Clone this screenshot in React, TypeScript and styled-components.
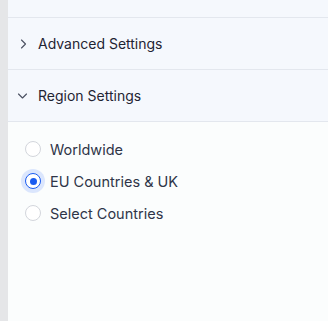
import React, { useState } from 'react'
import styled, { createGlobalStyle } from 'styled-components'

const Global = createGlobalStyle`
  html, body {
    margin: 0;
    padding: 0;
    background: #ffffff;
  }
  body {
    font-family: Inter, "Noto Sans", "Liberation Sans", sans-serif;
  }
`

const Page = styled.div`
  display: flex;
  width: 329px;
  height: 321px;
  background: #ffffff;
`

const Gutter = styled.div`
  width: 8px;
  flex-shrink: 0;
  background: #e5e6e8;
`

const Panel = styled.div`
  width: 320px;
  display: flex;
  flex-direction: column;
  background: #fbfdfd;
`

const TopStub = styled.div`
  height: 17px;
  background: #f5f8fd;
  border-bottom: 1px solid #e3e7ee;
`

const Header = styled.div`
  height: 51px;
  display: flex;
  align-items: center;
  gap: 10px;
  padding-left: 8px;
  background: #f5f8fd;
  border-bottom: 1px solid #e3e7ee;
  font-size: 14px;
  color: #1f2433;
  cursor: pointer;
  svg {
    flex-shrink: 0;
    color: #4a5060;
  }
`

const Options = styled.div`
  display: flex;
  flex-direction: column;
  gap: 10px;
  padding: 16px 0 0 16px;
`

const Option = styled.label`
  display: flex;
  align-items: center;
  gap: 9px;
  height: 22px;
  font-size: 14.5px;
  color: #2f3548;
  cursor: pointer;
`

const Dot = styled.span<{ $on: boolean }>`
  width: 16px;
  height: 16px;
  margin-left: 1px;
  box-sizing: border-box;
  border-radius: 50%;
  border: ${p => (p.$on ? '1.5px solid #1a5cf0' : '1px solid #d3d6dc')};
  background: #ffffff;
  box-shadow: ${p => (p.$on ? '0 0 0 4px #dbe6fd' : 'none')};
  display: flex;
  align-items: center;
  justify-content: center;
  &::after {
    content: '';
    width: 7px;
    height: 7px;
    border-radius: 50%;
    background: #1a5cf0;
    display: ${p => (p.$on ? 'block' : 'none')};
  }
`

const Chevron = ({ open }: { open: boolean }) => (
  <svg width="12" height="12" viewBox="0 0 12 12" fill="none" stroke="currentColor" strokeWidth="1.1" strokeLinecap="round" strokeLinejoin="round">
    {open ? <path d="M2.5 4 L6.5 8 L10.5 4" /> : <path d="M5.5 2 L9.5 6 L5.5 10" />}
  </svg>
)

const regions = ['Worldwide', 'EU Countries & UK', 'Select Countries']

export default function App() {
  const [region, setRegion] = useState('EU Countries & UK')
  return (
    <Page>
      <Global />
      <Gutter />
      <Panel>
        <TopStub />
        <Header>
          <Chevron open={false} />
          Advanced Settings
        </Header>
        <Header>
          <Chevron open={true} />
          Region Settings
        </Header>
        <Options>
          {regions.map(r => (
            <Option key={r} onClick={() => setRegion(r)}>
              <Dot $on={region === r} />
              {r}
            </Option>
          ))}
        </Options>
      </Panel>
    </Page>
  )
}
